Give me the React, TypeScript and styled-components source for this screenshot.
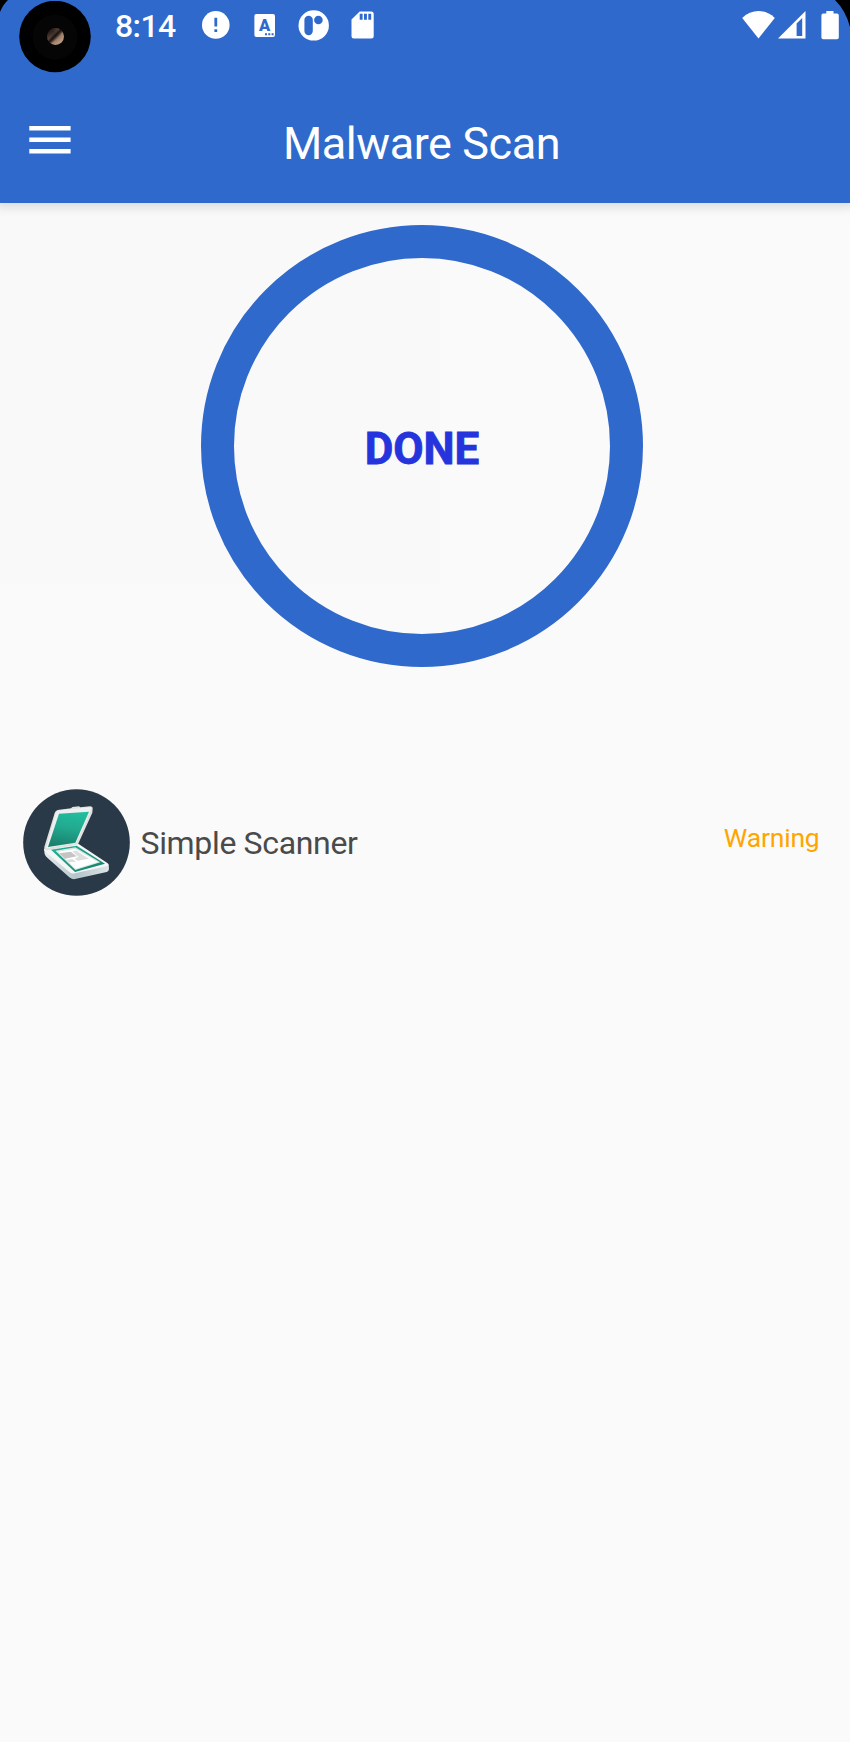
import React from "react";
import styled, { createGlobalStyle } from "styled-components";

const BLUE = "#3069cc";

const GlobalStyle = createGlobalStyle`
  * { box-sizing: border-box; }
  body {
    margin: 0;
    background: #fafafa;
    font-family: Roboto, "Liberation Sans", sans-serif;
  }
  svg { display: block; flex: none; }
`;

const Screen = styled.div`
  width: 850px;
  height: 1742px;
  overflow: hidden;
  display: flex;
  flex-direction: column;
  background: #fafafa linear-gradient(#f9f9f9, #f9f9f9) no-repeat 0 0 / 440px 585px;
`;

const Header = styled.header`
  position: relative;
  height: 203px;
  flex: none;
  background: ${BLUE};
  color: #fff;
  box-shadow: 0 0 10px 4px rgba(0, 0, 0, 0.13);
`;

const StatusBar = styled.div`
  height: 50px;
  padding: 0 11px 0 115px;
  display: flex;
  align-items: center;
`;

const Clock = styled.span`
  width: 87px;
  margin-top: 1px;
  font-size: 32px;
  line-height: 38px;
  font-weight: 500;
  letter-spacing: -0.6px;
  white-space: nowrap;
`;

const Notifications = styled.div`
  display: flex;
  align-items: center;
  flex: 1;
`;

const IconSlot = styled.span<{ $before?: number }>`
  margin-left: ${(p) => p.$before ?? 0}px;
`;

const SystemIcons = styled.div`
  display: flex;
  align-items: center;
`;

const IconLetter = styled.text`
  fill: ${BLUE};
  font-family: Roboto, "Liberation Sans", sans-serif;
  font-size: 16.5px;
  font-weight: 900;
  text-anchor: middle;
`;

const Corner = styled.svg<{ $side: "left" | "right" }>`
  position: absolute;
  top: 0;
  ${(p) => p.$side}: 0;
`;

const CameraCutout = styled.svg`
  position: absolute;
  left: 19px;
  top: 1px;
`;

const AppBar = styled.div`
  height: 153px;
  padding: 63px 29px 0;
  display: grid;
  grid-template-columns: 42px 1fr 42px;
`;

const MenuButton = styled.button`
  margin: 13px 0 0;
  padding: 0;
  border: 0;
  width: 42px;
  height: 28px;
  background: none;
`;

const Title = styled.h1`
  margin: 0 7px 0 0;
  text-align: center;
  font-size: 45px;
  line-height: 61px;
  font-weight: 400;
  letter-spacing: -0.44px;
  white-space: nowrap;
`;

const Progress = styled.div`
  width: 442px;
  height: 442px;
  flex: none;
  margin: 22px 0 0 201px;
  border: 33px solid ${BLUE};
  border-radius: 50%;
  display: flex;
  align-items: center;
  justify-content: center;
`;

const ProgressLabel = styled.span`
  margin-top: 6px;
  color: #2534dc;
  font-size: 44px;
  line-height: 52px;
  font-weight: 700;
  -webkit-text-stroke: 0.8px #2534dc;
`;

const AppRow = styled.div`
  margin-top: 122px;
  height: 107px;
  padding: 0 30.5px 0 23px;
  display: flex;
  align-items: center;
`;

const AppName = styled.span`
  flex: 1;
  margin: 1px 0 0 10.5px;
  color: #4a4a4a;
  font-size: 32px;
  line-height: 40px;
  letter-spacing: -0.34px;
`;

const AppStatus = styled.span`
  margin-bottom: 9px;
  color: #ffa500;
  font-size: 26.5px;
  line-height: 32px;
  letter-spacing: -0.2px;
`;

const AlertIcon = () => (
  <svg width="28" height="28" viewBox="0 0 28 28">
    <circle cx="13.8" cy="13.9" r="13.8" fill="#fff" />
    <path d="M12.4 6.8h2.8v8.8h-2.8zM12.4 18.3h2.8v2.8h-2.8z" fill={BLUE} />
  </svg>
);

const LetterIcon = () => (
  <svg width="21" height="23" viewBox="0 0 21 23">
    <rect x="0.4" width="20.6" height="23" rx="2" fill="#fff" />
    <IconLetter x="10.5" y="17.4">A</IconLetter>
    <path d="M11 19.3h2v2h-2zM14.3 19.3h2v2h-2zM17.6 19.3h2v2h-2z" fill={BLUE} />
  </svg>
);

const BadgeIcon = () => (
  <svg width="31" height="31" viewBox="0 0 31 31">
    <circle cx="15.7" cy="15.4" r="15.2" fill="#fff" />
    <rect x="6.4" y="5.8" width="8.4" height="19.4" rx="4.2" fill={BLUE} />
    <circle cx="20.4" cy="10" r="4.3" fill={BLUE} />
  </svg>
);

const SdCardIcon = () => (
  <svg width="23" height="28" viewBox="0 0 23 28">
    <path d="M8.7 .4H20.2a2.5 2.5 0 0 1 2.5 2.5v22.2a2.5 2.5 0 0 1-2.5 2.5H3A2.5 2.5 0 0 1 .5 25.1V8.6z" fill="#fff" />
    <path d="M8.7 2.8h2.9v6H8.7zM13 2.8h2.9v6H13zM17.3 2.8h2.9v6h-2.9z" fill={BLUE} />
  </svg>
);

const WifiIcon = () => (
  <svg width="33" height="28" viewBox="0 0 33 28">
    <path d="M.2 6.9Q7.5 .1 16.5 .1T32.8 6.9L16.5 27.5z" fill="#fff" />
  </svg>
);

const SignalIcon = () => (
  <svg width="28" height="28" viewBox="0 0 28 28">
    <path fillRule="evenodd" d="M0 27.4 27.5 0v27.4zM18.6 12.5V25h5.6V6.9z" fill="#fff" />
  </svg>
);

const BatteryIcon = () => (
  <svg width="18" height="29" viewBox="0 0 18 29">
    <path d="M5.3 2.6V.1h7.2V2.6H16a1.8 1.8 0 0 1 1.8 1.8v22A1.8 1.8 0 0 1 16 28.2H2.2A1.8 1.8 0 0 1 .4 26.4v-22A1.8 1.8 0 0 1 2.2 2.6z" fill="#fff" />
  </svg>
);

const ScannerLogo = () => (
  <svg width="107" height="107" viewBox="39 27 321 321">
    <defs>
      <linearGradient id="lid" x1="0.6" y1="0" x2="0.4" y2="1">
        <stop offset="0" stopColor="#20bd9e" />
        <stop offset="0.45" stopColor="#22aa90" />
        <stop offset="1" stopColor="#19806c" />
      </linearGradient>
      <linearGradient id="frame" x1="0" y1="0" x2="1" y2="1">
        <stop offset="0" stopColor="#20b596" />
        <stop offset="1" stopColor="#167d69" />
      </linearGradient>
      <linearGradient id="side" x1="0" y1="0" x2="1" y2="0">
        <stop offset="0" stopColor="#e8edf0" />
        <stop offset="0.5" stopColor="#b4c4ca" />
        <stop offset="1" stopColor="#dce5e9" />
      </linearGradient>
    </defs>
    <circle cx="199.5" cy="187.5" r="160" fill="#2a3948" />
    <path d="M102 206 L104 222 Q106 228 112 233 L178 292 Q185 299 195 297 L290 276 Q297 273 297 266 L296 254 Z" fill="url(#side)" />
    <path d="M102 208 Q105 202 116 201 L196 190 Q202 189 207 193 L293 250 Q300 256 290 259 L194 280 Q185 282 178 276 L106 215 Q102 211 102 208Z" fill="#f4f5f5" />
    <path d="M134 99 Q137 90 148 89 L183 85 L187 81 L207 79 L211 82 L240 79 Q249 79 248 87 L247 98 L204 193 L112 211 Q102 212 103 201Z" fill="#dfe1e1" />
    <path d="M137 100 Q140 92 149 91 L239 82 Q246 82 244 88 L199 189 L108 205Z" fill="#efefef" />
    <path d="M147 101 L237 95 L196 188 L114 201Z" fill="url(#lid)" />
    <path d="M123 209 L200 197 L285 251 L195 276Z" fill="url(#frame)" />
    <path d="M136 212 L196 202 L271 247 L196 270Z" fill="#dbe9e5" />
    <path d="M145 215 L196 207 L263 246 L197 266Z" fill="#fff" />
    <path d="M148 220 L182 215 L200 229 L165 236Z" fill="#c4c4c4" />
    <path d="M187 214 L199 212 L237 236 L203 242 L194 236 L205 231Z" fill="#dedede" />
    <path d="M170 240 L187 237 L198 245 L177 247Z" fill="#dedede" />
  </svg>
);

export default function App() {
  return (
    <>
      <GlobalStyle />
      <Screen>
        <Header>
          <StatusBar>
            <Clock>8:14</Clock>
            <Notifications>
              <IconSlot><AlertIcon /></IconSlot>
              <IconSlot $before={24}><LetterIcon /></IconSlot>
              <IconSlot $before={23}><BadgeIcon /></IconSlot>
              <IconSlot $before={22}><SdCardIcon /></IconSlot>
            </Notifications>
            <SystemIcons>
              <IconSlot><WifiIcon /></IconSlot>
              <IconSlot $before={3}><SignalIcon /></IconSlot>
              <IconSlot $before={15}><BatteryIcon /></IconSlot>
            </SystemIcons>
          </StatusBar>
          <AppBar>
            <MenuButton aria-label="Menu">
              <svg width="42" height="28" viewBox="0 0 42 28">
                <path d="M.3 .1h41.3v4.5H.3zM.3 11.4h41.3v4.5H.3zM.3 23h41.3v4.5H.3z" fill="#fff" />
              </svg>
            </MenuButton>
            <Title>Malware Scan</Title>
          </AppBar>
          <Corner $side="left" width="8" height="12" viewBox="0 0 8 12">
            <path d="M0 0H8Q3 4.5 0 12z" />
          </Corner>
          <Corner $side="right" width="15" height="28" viewBox="0 0 15 28">
            <path d="M0 0H15V27Q11 11 0 0z" />
          </Corner>
          <CameraCutout width="72" height="72" viewBox="0 0 72 72">
            <defs>
              <linearGradient id="lens" x1="0" y1="0" x2="1" y2="1">
                <stop offset="0.1" stopColor="#30231f" />
                <stop offset="0.36" stopColor="#6a5146" />
                <stop offset="0.48" stopColor="#1c1310" />
                <stop offset="0.62" stopColor="#a98770" />
                <stop offset="1" stopColor="#c3a58c" />
              </linearGradient>
              <radialGradient id="lensShade" cx="0.3" cy="0.2" r="0.9">
                <stop offset="0.1" stopColor="#000" stopOpacity="0.4" />
                <stop offset="0.8" stopColor="#000" stopOpacity="0" />
              </radialGradient>
            </defs>
            <circle cx="36" cy="35.5" r="35.8" fill="#000" />
            <circle cx="36" cy="36" r="22.5" fill="#050505" />
            <circle cx="36.5" cy="35.5" r="8.5" fill="url(#lens)" />
            <circle cx="36.5" cy="35.5" r="8.6" fill="url(#lensShade)" />
          </CameraCutout>
        </Header>
        <Progress>
          <ProgressLabel>DONE</ProgressLabel>
        </Progress>
        <AppRow>
          <ScannerLogo />
          <AppName>Simple Scanner</AppName>
          <AppStatus>Warning</AppStatus>
        </AppRow>
      </Screen>
    </>
  );
}
